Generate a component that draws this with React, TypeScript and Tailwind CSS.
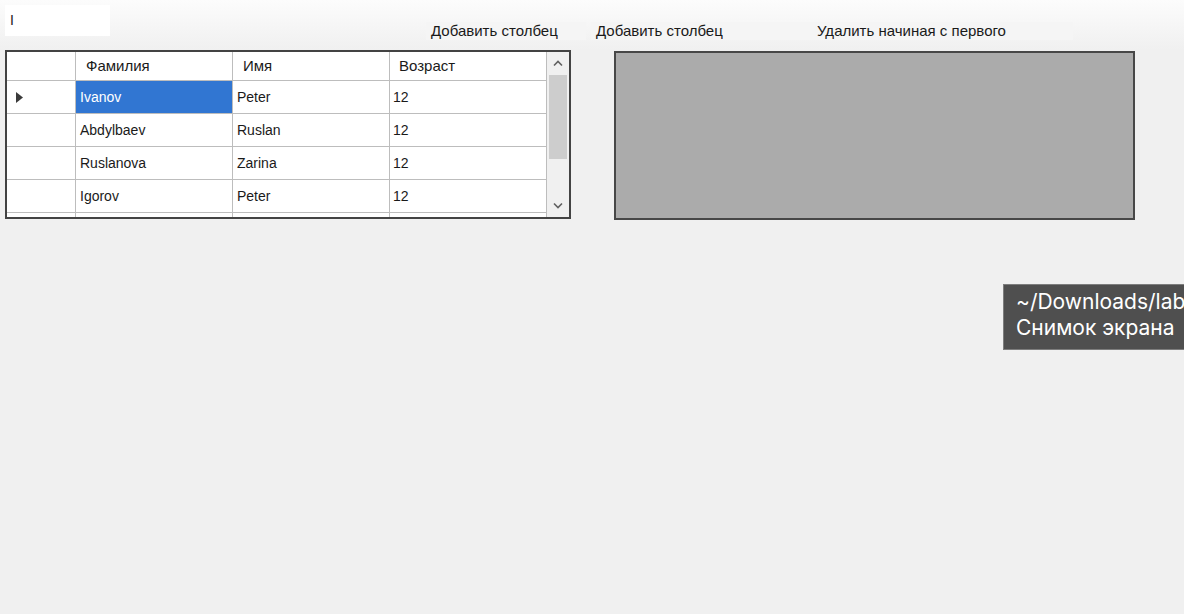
import React from "react";

// Данные таблицы (как в форме WinForms)
const rows = [
  { last: "Ivanov", first: "Peter", age: "12" },
  { last: "Abdylbaev", first: "Ruslan", age: "12" },
  { last: "Ruslanova", first: "Zarina", age: "12" },
  { last: "Igorov", first: "Peter", age: "12" },
  { last: "", first: "", age: "" },
];

const win = { fontFamily: '"Liberation Sans", Arial, sans-serif' };

function Chevron({ down }: { down?: boolean }) {
  return (
    <svg width="10" height="7" viewBox="0 0 10 7" className="block">
      <path
        d={down ? "M1 1.5 L5 5.5 L9 1.5" : "M1 5.5 L5 1.5 L9 5.5"}
        fill="none"
        stroke="#606060"
        strokeWidth="1.6"
      />
    </svg>
  );
}

function Grid() {
  return (
    <div className="flex w-[566px] h-[169px] border-2 border-[#434343] bg-white overflow-hidden">
      <div className="flex flex-col w-[540px] overflow-hidden">
        {/* заголовок */}
        <div className="flex h-[29px] shrink-0 border-b border-[#bdbdbd] text-[15px] text-[#1a1a1a]">
          <div className="w-[69px] border-r border-[#bdbdbd]" />
          <div className="w-[157px] border-r border-[#bdbdbd] flex items-center pl-[10px]">Фамилия</div>
          <div className="w-[157px] border-r border-[#bdbdbd] flex items-center pl-[10px]">Имя</div>
          <div className="w-[157px] border-r border-[#bdbdbd] flex items-center pl-[9px]">Возраст</div>
        </div>
        {rows.map((r, i) => (
          <div key={i} className="flex h-[33px] shrink-0 border-b border-[#bdbdbd] text-[14px] text-[#1a1a1a]">
            <div className="w-[69px] border-r border-[#bdbdbd] flex items-center pl-[9px]">
              {i === 0 && (
                <svg width="7" height="11" viewBox="0 0 7 11">
                  <path d="M0 0 L7 5.5 L0 11 Z" fill="#3a3a3a" />
                </svg>
              )}
            </div>
            <div
              className={`w-[157px] border-r border-[#bdbdbd] flex items-center pl-[4px] ${
                i === 0 ? "bg-[#3176d2] text-white" : ""
              }`}
            >
              {r.last}
            </div>
            <div className="w-[157px] border-r border-[#bdbdbd] flex items-center pl-[4px]">{r.first}</div>
            <div className="w-[157px] border-r border-[#bdbdbd] flex items-center pl-[3px]">{r.age}</div>
          </div>
        ))}
      </div>
      {/* вертикальная прокрутка */}
      <div className="flex flex-col w-[22px] bg-[#f0f0f0] items-center">
        <div className="h-[23px] flex items-center justify-center">
          <Chevron />
        </div>
        <div className="w-[18px] h-[84px] bg-[#cdcdcd]" />
        <div className="flex-1" />
        <div className="h-[23px] flex items-center justify-center">
          <Chevron down />
        </div>
      </div>
    </div>
  );
}

export default function App() {
  return (
    <div className="relative w-[1184px] h-[614px] overflow-hidden bg-[#f0f0f0]" style={win}>
      {/* верхняя полоса: поле ввода и кнопки */}
      <div className="flex items-start h-[50px] bg-gradient-to-b from-[#fcfcfc] to-[#f0f0f0]">
        <div className="ml-[5px] mt-[5px] w-[105px] h-[31px] bg-white text-[14px] text-[#1a1a1a] pl-[5px] pt-[5px]">
          I
        </div>
        <div className="flex ml-[316px] mt-[22px] h-[18px] text-[15px] text-[#1a1a1a]">
          <div className="w-[160px] bg-[#f5f5f5] pl-[5px] leading-[18px] whitespace-nowrap">Добавить столбец</div>
          <div className="w-[5px]" />
          <div className="w-[159px] bg-[#f5f5f5] pl-[5px] leading-[18px] whitespace-nowrap">Добавить столбец</div>
          <div className="w-[323px] bg-[#f5f5f5] text-center leading-[18px] whitespace-nowrap">Удалить начиная с первого</div>
        </div>
      </div>

      <div className="flex items-start">
        <div className="ml-[5px]">
          <Grid />
        </div>
        <div className="ml-[43px] mt-[1px] w-[521px] h-[169px] bg-[#ababab] border-2 border-[#474747]" />
      </div>

      {/* всплывающая подсказка поверх окна */}
      <div
        className="absolute left-[1003px] top-[284px] w-[260px] bg-[#4f4f4f] border border-[#7d7d7d] pl-[12px] pt-[4px] pb-[8px] text-white text-[21px] leading-[26px] whitespace-nowrap"
        style={{ fontFamily: 'Inter, "Noto Sans", sans-serif' }}
      >
        <div>~/Downloads/lab</div>
        <div>Снимок экрана</div>
      </div>
    </div>
  );
}
